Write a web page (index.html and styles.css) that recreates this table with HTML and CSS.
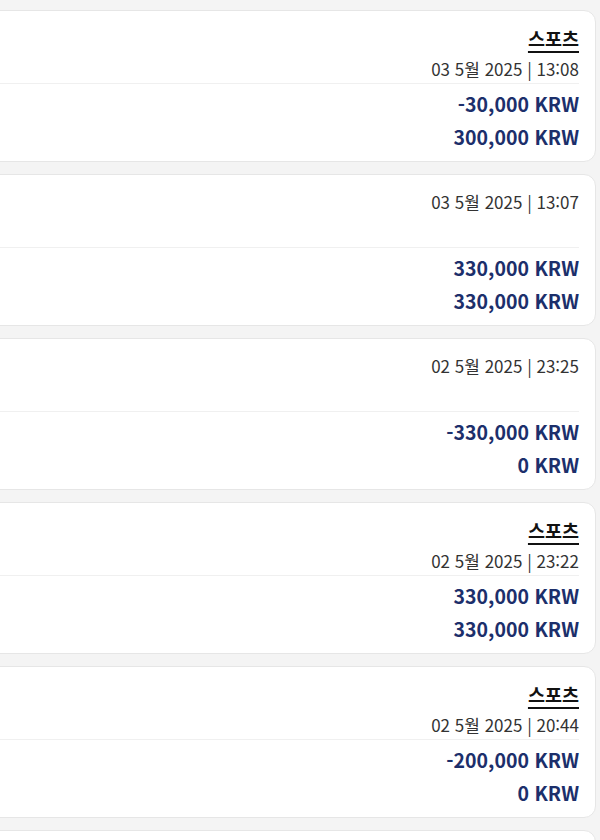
FILE: index.html
```html
<!DOCTYPE html>
<html lang="ko">
<head>
<meta charset="utf-8">
<link rel="stylesheet" href="styles.css">
</head>
<body>
<div class="list">
  <div class="card">
    <div class="top">
      <a class="cat">스포츠</a>
      <div class="date">03 5월 2025 | 13:08</div>
    </div>
    <div class="bottom">
      <div class="amt">-30,000 KRW</div>
      <div class="amt">300,000 KRW</div>
    </div>
  </div>
  <div class="card">
    <div class="top">
      <div class="date">03 5월 2025 | 13:07</div>
    </div>
    <div class="bottom">
      <div class="amt">330,000 KRW</div>
      <div class="amt">330,000 KRW</div>
    </div>
  </div>
  <div class="card">
    <div class="top">
      <div class="date">02 5월 2025 | 23:25</div>
    </div>
    <div class="bottom">
      <div class="amt">-330,000 KRW</div>
      <div class="amt">0 KRW</div>
    </div>
  </div>
  <div class="card">
    <div class="top">
      <a class="cat">스포츠</a>
      <div class="date">02 5월 2025 | 23:22</div>
    </div>
    <div class="bottom">
      <div class="amt">330,000 KRW</div>
      <div class="amt">330,000 KRW</div>
    </div>
  </div>
  <div class="card">
    <div class="top">
      <a class="cat">스포츠</a>
      <div class="date">02 5월 2025 | 20:44</div>
    </div>
    <div class="bottom">
      <div class="amt">-200,000 KRW</div>
      <div class="amt">0 KRW</div>
    </div>
  </div>
  <div class="card">
    <div class="top"></div>
    <div class="bottom"></div>
  </div>
</div>
</body>
</html>
```

FILE: styles.css
```css
html, body {
  margin: 0;
  padding: 0;
  background: #f4f4f4;
  overflow: hidden;
  height: 840px;
}
body {
  font-family: "Noto Sans CJK KR", "Noto Sans", sans-serif;
}
.list {
  display: flex;
  flex-direction: column;
  gap: 12px;
  padding-top: 10px;
  margin-left: -30px;
  margin-right: 4px;
}
.card {
  background: #fff;
  border: 1px solid #e6e6e6;
  border-radius: 12px;
  height: 152px;
  box-sizing: border-box;
  display: flex;
  flex-direction: column;
  flex-shrink: 0;
  padding: 0 16px 0 0;
}
.top {
  height: 73px;
  box-sizing: border-box;
  padding-top: 13px;
  display: flex;
  flex-direction: column;
  align-items: flex-end;
  gap: 3px;
  border-bottom: 1px solid #f0f0f0;
}
.cat {
  font-size: 18.5px;
  font-weight: 700;
  line-height: 28px;
  color: #111;
  text-decoration: underline;
  text-underline-offset: 5px;
  text-decoration-thickness: 1.5px;
}
.date {
  font-size: 17px;
  line-height: 28px;
  color: #333;
}
.bottom {
  padding-top: 3px;
  display: flex;
  flex-direction: column;
  align-items: flex-end;
}
.amt {
  font-size: 19.5px;
  font-weight: 700;
  line-height: 33px;
  color: #1c2f6b;
}
```
